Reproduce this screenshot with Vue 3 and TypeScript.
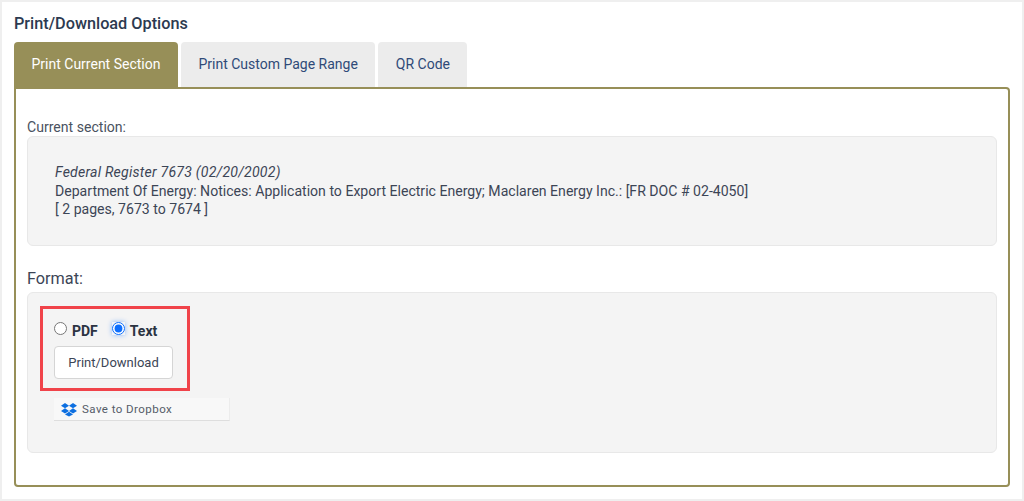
<script setup lang="ts">
const tabs: { label: string; active?: boolean }[] = [
  { label: 'Print Current Section', active: true },
  { label: 'Print Custom Page Range' },
  { label: 'QR Code' },
]
</script>

<template>
  <div class="page">
    <h1 class="title">Print/Download Options</h1>
    <div class="tabs">
      <div v-for="t in tabs" :key="t.label" class="tab" :class="{ active: t.active }">{{ t.label }}</div>
    </div>
    <div class="panel">
      <div class="label">Current section:</div>
      <div class="well info">
        <em>Federal Register 7673 (02/20/2002)</em><br />
        Department Of Energy: Notices: Application to Export Electric Energy; Maclaren Energy Inc.: [FR DOC # 02-4050]<br />
        [ 2 pages, 7673 to 7674 ]
      </div>
      <div class="format-label">Format:</div>
      <div class="well format">
        <div class="radios">
          <label class="radio"><input type="radio" name="fmt" /><b>PDF</b></label>
          <label class="radio second"><input type="radio" name="fmt" checked /><b>Text</b></label>
        </div>
        <button class="btn" type="button">Print/Download</button>
        <div class="dropbox">
          <svg width="16" height="15" viewBox="0 0 16 14" aria-hidden="true">
            <path fill="#0d6fe0" d="M4 0.6 0 3.2l4 2.6 4-2.6zM12 0.6 8 3.2l4 2.6 4-2.6zM0 8.4l4 2.6 4-2.6-4-2.6zM12 5.8 8 8.4l4 2.6 4-2.6zM4 11.9l4 2.1 4-2.1-4-2.6z" />
          </svg>
          <span>Save to Dropbox</span>
        </div>
        <div class="highlight"></div>
      </div>
    </div>
  </div>
</template>

<style>
html, body { margin: 0; background: #efefef; }
</style>

<style scoped>
.page {
  box-sizing: border-box;
  width: 1020px;
  height: 497px;
  margin: 2px;
  padding: 12px 12px 0;
  background: #fff;
  font-family: Roboto, "Liberation Sans", sans-serif;
  color: #3a4354;
}
.title {
  margin: 0;
  font-size: 16.25px;
  line-height: 19px;
  font-weight: 500;
  color: #2c3a50;
}
.tabs {
  display: flex;
  gap: 3px;
  margin-top: 9px;
}
.tab {
  height: 45px;
  line-height: 45px;
  padding: 0 17.5px;
  font-size: 14px;
  background: #ececec;
  color: #2f4a78;
  border-radius: 4px 4px 0 0;
}
.tab.active {
  background: #978f58;
  color: #fff;
}
.panel {
  box-sizing: border-box;
  width: 996px;
  height: 400px;
  padding: 30px 11px 0;
  border: 2px solid #978f58;
  border-radius: 0 4px 4px 4px;
}
.label {
  font-size: 14.08px;
  line-height: 16px;
  color: #4a5260;
}
.well {
  box-sizing: border-box;
  width: 970px;
  background: #f4f4f4;
  border: 1px solid #e8e8e8;
  border-radius: 6px;
}
.info {
  height: 110px;
  margin-top: 1px;
  padding: 26px 27px 0;
  font-size: 14.08px;
  line-height: 18.5px;
  color: #3c4556;
}
.info em { letter-spacing: 0.23px; }
.format-label {
  margin-top: 23px;
  font-size: 16.25px;
  line-height: 19px;
  color: #3c4556;
}
.format {
  position: relative;
  height: 161px;
  margin-top: 4px;
  padding: 28px 26px 0;
}
.radios {
  display: flex;
  align-items: center;
  height: 20px;
}
.radio {
  display: flex;
  align-items: center;
  font-size: 14px;
  color: #2b3342;
}
.radio input {
  width: 13px;
  height: 13px;
  margin: 0 5px 0 0;
  accent-color: #0d6efd;
  transform: translateY(-3px);
}
.radio input:checked {
  border-radius: 50%;
  box-shadow: 0 0 5px rgba(13, 110, 253, 0.45);
}
.radio.second { margin-left: 14px; }
.btn {
  display: block;
  box-sizing: border-box;
  width: 119px;
  height: 33px;
  margin-top: 5px;
  background: #fff;
  border: 1px solid #d5d5d5;
  border-radius: 4px;
  font-family: inherit;
  font-size: 13px;
  color: #3c4556;
}
.dropbox {
  display: flex;
  align-items: center;
  gap: 5px;
  box-sizing: border-box;
  width: 176px;
  height: 23px;
  margin-top: 19px;
  padding-left: 7px;
  background: #f8f8f8;
  border-bottom: 1px solid #dedede;
  border-right: 1px solid #ececec;
  font-size: 11.5px;
  letter-spacing: 0.45px;
  color: #555c68;
}
.highlight {
  position: absolute;
  left: 12px;
  top: 13px;
  width: 150px;
  height: 85px;
  box-sizing: border-box;
  border: 3px solid #f0434a;
  pointer-events: none;
}
</style>
